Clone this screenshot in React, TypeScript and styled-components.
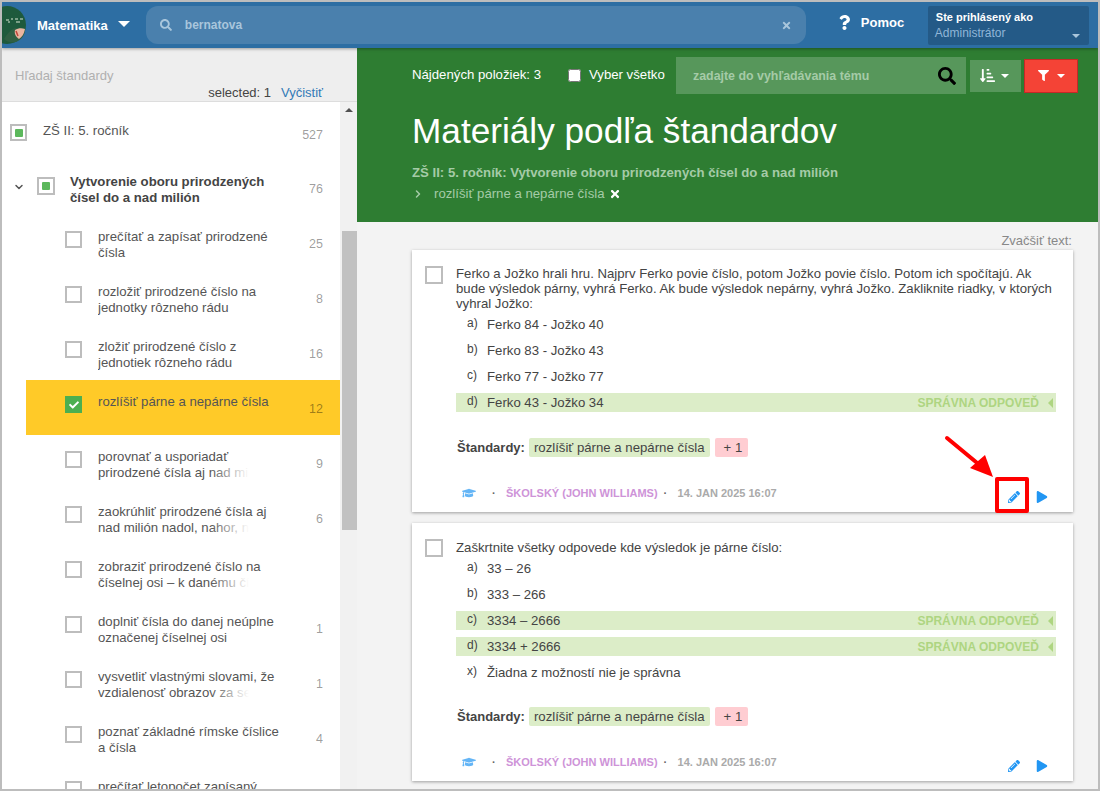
import styled, { createGlobalStyle } from "styled-components";
import {
  FaCheck,
  FaFilter,
  FaGraduationCap,
  FaPencilAlt,
  FaPlay,
  FaQuestion,
  FaSearch,
  FaSortAmountDownAlt,
  FaTimes,
} from "react-icons/fa";
import { FiChevronDown, FiChevronRight } from "react-icons/fi";

const GlobalStyle = createGlobalStyle`
  html, body {
    margin: 0;
    height: 100%;
    overflow: hidden;
  }
  body {
    font-family: "Liberation Sans", Arial, sans-serif;
    font-size: 13.2px;
    color: #444;
  }
`;

const Frame = styled.div`
  height: 100vh;
  box-sizing: border-box;
  border: 2px solid #bdbdbd;
  display: flex;
  flex-direction: column;
  overflow: hidden;
  position: relative;
`;

const Header = styled.header`
  height: 46px;
  flex: none;
  display: flex;
  align-items: center;
  background: #2d6ea3;
  box-shadow: 0 1px 3px rgba(0, 0, 0, 0.35);
  position: relative;
  z-index: 2;
`;

const Logo = styled.svg`
  width: 24px;
  height: 38px;
  flex: none;
`;

const SubjectName = styled.span`
  margin-left: 11px;
  font-size: 13px;
  font-weight: bold;
  color: #fff;
`;

const Caret = styled.span<{ $size?: number; $color?: string }>`
  display: inline-block;
  width: 0;
  height: 0;
  border-left: ${(p) => p.$size ?? 4}px solid transparent;
  border-right: ${(p) => p.$size ?? 4}px solid transparent;
  border-top: ${(p) => p.$size ?? 4}px solid ${(p) => p.$color ?? "#fff"};
`;

const SubjectCaret = styled(Caret)`
  margin: -3px 16px 0 10px;
`;

const HeaderSearch = styled.div`
  width: 660px;
  height: 38px;
  box-sizing: border-box;
  display: flex;
  align-items: center;
  padding: 0 14px 0 14px;
  border-radius: 12px;
  background: #4a80ad;
  color: #a9c6dc;
  font-size: 12px;
  font-weight: bold;
  flex: none;
`;

const HeaderSearchText = styled.span`
  flex: 1;
  margin-left: 13px;
`;

const HelpLink = styled.div`
  width: 122px;
  height: 38px;
  padding: 0 0 5px 31px;
  flex: none;
  box-sizing: border-box;
  display: flex;
  align-items: center;
  gap: 9px;
  color: #fff;
  font-size: 13px;
  font-weight: bold;
`;

const UserBox = styled.div`
  width: 161px;
  height: 39px;
  box-sizing: border-box;
  padding: 4px 8px 0;
  flex: none;
  background: #245a87;
  border-radius: 2px;
  position: relative;
`;

const UserTitle = styled.div`
  color: #fff;
  font-size: 11px;
  font-weight: bold;
  line-height: 15px;
`;

const UserName = styled.div`
  margin-left: -1px;
  color: #90b6d8;
  font-size: 12px;
  line-height: 16px;
`;

const UserCaret = styled(Caret)`
  position: absolute;
  right: 9px;
  bottom: 7px;
`;

const Body = styled.div`
  flex: 1;
  min-height: 0;
  display: flex;
`;

const Sidebar = styled.aside`
  width: 355px;
  flex: none;
  display: flex;
  flex-direction: column;
  background: #fff;
`;

const SidebarTop = styled.div`
  height: 54px;
  flex: none;
  box-sizing: border-box;
  padding: 20px 34px 0 13px;
  background: #eee;
  border-bottom: 1px solid #ddd;
`;

const SidebarSearch = styled.div`
  color: #b0b0b0;
  font-size: 13px;
  line-height: 15px;
`;

const SelectedLine = styled.div`
  margin-top: 2px;
  text-align: right;
  font-size: 13px;
  line-height: 15px;
  color: #444;
`;

const ClearLink = styled.span`
  margin-left: 10px;
  color: #337ab7;
`;

const ListArea = styled.div`
  flex: 1;
  min-height: 0;
  display: flex;
`;

const TreeList = styled.div`
  flex: 1;
  min-width: 0;
  overflow: hidden;
`;

const RootRow = styled.div`
  height: 55px;
  box-sizing: border-box;
  display: flex;
  padding: 19px 17px 0 8px;
`;

const GroupRow = styled.div`
  height: 58px;
  display: flex;
  box-sizing: border-box;
  padding: 19px 17px 0 0;
`;

const ItemRow = styled.div<{ $active?: boolean }>`
  height: 55px;
  margin-left: 24px;
  box-sizing: border-box;
  display: flex;
  padding: 13px 17px 0 39px;
  background: ${(p) => (p.$active ? "#ffca28" : "transparent")};
`;

const Check = styled.span<{ $checked?: boolean }>`
  width: 17px;
  height: 17px;
  box-sizing: border-box;
  flex: none;
  display: flex;
  align-items: center;
  justify-content: center;
  border: 2px solid ${(p) => (p.$checked ? "#4caf50" : "#bdbdbd")};
  background: ${(p) => (p.$checked ? "#4caf50" : "#fff")};
  color: #fff;
  font-size: 10px;
  margin-top: 3px;
`;

const GroupCheck = styled(Check)`
  width: 18px;
  height: 18px;
  margin-top: 1px;
`;

const PartialMark = styled.span`
  width: 8px;
  height: 8px;
  border-radius: 1px;
  background: #5cb85c;
`;

const RootLabel = styled.span`
  flex: 1;
  margin: 2px 0 0 16px;
  line-height: 16px;
  color: #555;
`;

const GroupToggle = styled.span`
  width: 35px;
  flex: none;
  box-sizing: border-box;
  padding: 5px 0 0 11px;
  font-size: 12px;
  color: #555;
`;

const GroupLabel = styled.span`
  flex: 1;
  margin: -2px 0 0 15px;
  max-width: 210px;
  font-weight: bold;
  line-height: 16px;
  color: #444;
`;

const ItemLabel = styled.span<{ $fade?: boolean }>`
  flex: 1;
  position: relative;
  margin: 1px 0 0 16px;
  max-width: 190px;
  height: 32px;
  overflow: hidden;
  line-height: 16px;
  color: #555;

  &::after {
    content: "";
    display: ${(p) => (p.$fade ? "block" : "none")};
    position: absolute;
    top: 16px;
    left: 112px;
    right: 0;
    height: 16px;
    background: linear-gradient(to right, rgba(255, 255, 255, 0), #fff 50%);
  }
`;

const Count = styled.span`
  margin-left: auto;
  padding-top: 9px;
  line-height: 14px;
  font-size: 12.5px;
  color: rgba(0, 0, 0, 0.4);
`;

const RootCount = styled(Count)`
  padding-top: 7px;
`;

const GroupCount = styled(Count)`
  padding-top: 6px;
`;

const ScrollTrack = styled.div`
  width: 17px;
  flex: none;
  background: #f1f1f1;
`;

const ScrollArrow = styled.div`
  display: flex;
  justify-content: center;
  padding-top: 6px;
  height: 11px;
`;

const ScrollUp = styled.span`
  width: 0;
  height: 0;
  border-left: 4px solid transparent;
  border-right: 4px solid transparent;
  border-bottom: 4px solid #505050;
`;

const ScrollThumb = styled.div`
  width: 15px;
  height: 299px;
  margin: 112px 0 0 2px;
  background: #c1c1c1;
`;

const Main = styled.main`
  flex: 1;
  min-width: 0;
  display: flex;
  flex-direction: column;
  background: #f3f3f3;
  position: relative;
`;

const Hero = styled.section`
  height: 174px;
  flex: none;
  box-sizing: border-box;
  background: #2e7d32;
  padding: 9px 19px 0 55px;
`;

const HeroBar = styled.div`
  display: flex;
  align-items: center;
  color: #fff;
`;

const FoundLabel = styled.span`
  width: 156px;
  flex: none;
  margin-bottom: 2px;
`;

const SelectAll = styled.label`
  width: 108px;
  flex: none;
  display: flex;
  align-items: center;
  gap: 8px;
`;

const SelectAllText = styled.span`
  margin-bottom: 2px;
`;

const NativeCheck = styled.input`
  width: 13px;
  height: 13px;
  margin: 0;
`;

const TopicSearch = styled.div`
  width: 290px;
  height: 37px;
  flex: none;
  box-sizing: border-box;
  padding: 0 10px 0 17px;
  display: flex;
  align-items: center;
  justify-content: space-between;
  background: rgba(255, 255, 255, 0.2);
  color: #a5cba7;
  font-weight: bold;
  font-size: 12.4px;
`;

const TopicIcon = styled.span`
  color: #000;
  font-size: 18px;
  display: flex;
`;

const SortButton = styled.div`
  width: 51px;
  height: 32px;
  margin-left: 4px;
  box-sizing: border-box;
  padding-right: 2px;
  flex: none;
  display: flex;
  align-items: center;
  justify-content: center;
  gap: 6px;
  background: rgba(255, 255, 255, 0.2);
  color: #fff;
  font-size: 15px;
`;

const FilterButton = styled(SortButton)`
  width: 54px;
  height: 34px;
  margin-left: 3px;
  padding-right: 0;
  background: #f44336;
  border: 1px solid #c62828;
  gap: 8px;
`;

const HeroTitle = styled.h1`
  margin: 16px 0 0;
  font-size: 35.2px;
  font-weight: normal;
  line-height: 42px;
  color: #fff;
`;

const HeroPath = styled.div`
  margin-top: 13px;
  font-weight: bold;
  line-height: 16px;
  color: #a5cba7;
`;

const HeroChip = styled.div`
  margin-top: 5px;
  display: flex;
  align-items: center;
  color: #a5cba7;
  line-height: 16px;
`;

const HeroChipArrow = styled.span`
  width: 22px;
  box-sizing: border-box;
  display: flex;
  font-size: 12px;
`;

const HeroChipClose = styled.span`
  margin-left: 4px;
  display: flex;
  color: #fff;
  font-size: 12px;
`;

const Content = styled.div`
  flex: 1;
  min-height: 0;
  overflow: hidden;
  padding: 0 25px 0 55px;
`;

const ZoomLabel = styled.div`
  height: 28px;
  box-sizing: border-box;
  padding: 12px 1px 0 0;
  text-align: right;
  font-size: 13px;
  line-height: 14px;
  color: #888;
`;

const Card = styled.article<{ $height: number }>`
  height: ${(p) => p.$height}px;
  box-sizing: border-box;
  margin-bottom: 11px;
  padding: 16px 17px 0 13px;
  background: #fff;
  box-shadow: 0 1px 3px rgba(0, 0, 0, 0.35);
  display: flex;
  gap: 13px;
`;

const CardCheck = styled(Check)`
  width: 18px;
  height: 18px;
  margin-top: 0;
`;

const CardBody = styled.div`
  flex: 1;
  min-width: 0;
`;

const Question = styled.p<{ $top: number; $bottom: number }>`
  margin: ${(p) => p.$top}px 0 ${(p) => p.$bottom}px;
  line-height: 15px;
  color: #444;
`;

const Answers = styled.div`
  margin-top: -3px;
`;

const Answer = styled.div<{ $correct?: boolean }>`
  height: 19px;
  margin-top: 7px;
  display: flex;
  align-items: center;
  padding: 0 3px 0 11px;
  background: ${(p) => (p.$correct ? "#dcedc8" : "transparent")};
  color: #444;
`;

const AnswerLetter = styled.span`
  width: 20px;
  flex: none;
  margin-bottom: 4px;
  font-size: 12px;
`;

const CorrectNote = styled.span`
  margin-left: auto;
  display: flex;
  align-items: center;
  gap: 9px;
  color: #aed581;
  font-weight: bold;
  font-size: 12px;
`;

const CorrectArrow = styled.span`
  width: 0;
  height: 0;
  border-top: 5px solid transparent;
  border-bottom: 5px solid transparent;
  border-right: 5px solid #aed581;
`;

const StandardsRow = styled.div<{ $gap: number }>`
  margin: ${(p) => p.$gap}px 0 0 1px;
  display: flex;
  align-items: center;
  gap: 4px;
`;

const StandardsLabel = styled.span`
  font-weight: bold;
  font-size: 13px;
  color: #444;
`;

const Chip = styled.span<{ $tone: "green" | "red" }>`
  height: 19px;
  display: flex;
  align-items: center;
  padding: 0 5px;
  border-radius: 2px;
  color: #444;
  background: ${(p) => (p.$tone === "green" ? "#dcedc8" : "#ffcdd2")};
`;

const PlusChip = styled(Chip)`
  margin-left: 1px;
  padding: 0 6px 0 9px;
`;

const CardFooter = styled.div`
  margin-top: 26px;
  display: flex;
  align-items: center;
  font-size: 11px;
  font-weight: bold;
  color: #aaa;
`;

const CapIcon = styled.span`
  margin-left: 6px;
  width: 30px;
  display: flex;
  color: #64b5f6;
  font-size: 14px;
`;

const Dot = styled.span`
  width: 14px;
  color: #666;
`;

const Author = styled.span`
  color: #ce93d8;
  margin-right: 6px;
`;

const CardActions = styled.span`
  margin: 8px 8px 0 auto;
  display: flex;
  align-items: center;
  gap: 16px;
  color: #2196f3;
  font-size: 12px;
`;

const HighlightBox = styled.div`
  position: absolute;
  left: 638px;
  top: 429px;
  width: 34px;
  height: 36px;
  box-sizing: border-box;
  border: 4px solid #f00;
  border-radius: 2px;
`;

const PointerArrow = styled.svg`
  position: absolute;
  left: 585px;
  top: 385px;
  width: 55px;
  height: 48px;
`;

type TreeItem = { label: string; count?: number; fade?: boolean; active?: boolean };

const treeItems: TreeItem[] = [
  { label: "prečítať a zapísať prirodzené čísla", count: 25 },
  { label: "rozložiť prirodzené číslo na jednotky rôzneho rádu", count: 8 },
  { label: "zložiť prirodzené číslo z jednotiek rôzneho rádu", count: 16 },
  { label: "rozlíšiť párne a nepárne čísla", count: 12, active: true },
  { label: "porovnať a usporiadať prirodzené čísla aj nad milión", count: 9, fade: true },
  { label: "zaokrúhliť prirodzené čísla aj nad milión nadol, nahor, na", count: 6, fade: true },
  { label: "zobraziť prirodzené číslo na číselnej osi – k danému číslu", fade: true },
  { label: "doplniť čísla do danej neúplne označenej číselnej osi", count: 1 },
  { label: "vysvetliť vlastnými slovami, že vzdialenosť obrazov za sebou", count: 1, fade: true },
  { label: "poznať základné rímske číslice a čísla", count: 4 },
  { label: "prečítať letopočet zapísaný rímskymi číslicami", count: 2 },
];

type QuestionData = {
  text: string;
  height: number;
  top: number;
  bottom: number;
  standardsGap: number;
  answers: { letter: string; text: string; correct?: boolean }[];
};

const questions: QuestionData[] = [
  {
    text: "Ferko a Jožko hrali hru. Najprv Ferko povie číslo, potom Jožko povie číslo. Potom ich spočítajú. Ak bude výsledok párny, vyhrá Ferko. Ak bude výsledok nepárny, vyhrá Jožko. Zakliknite riadky, v ktorých vyhral Jožko:",
    height: 262,
    top: 0,
    bottom: 0,
    standardsGap: 26,
    answers: [
      { letter: "a)", text: "Ferko 84 - Jožko 40" },
      { letter: "b)", text: "Ferko 83 - Jožko 43" },
      { letter: "c)", text: "Ferko 77 - Jožko 77" },
      { letter: "d)", text: "Ferko 43 - Jožko 34", correct: true },
    ],
  },
  {
    text: "Zaškrtnite všetky odpovede kde výsledok je párne číslo:",
    height: 258,
    top: 1,
    bottom: -2,
    standardsGap: 25,
    answers: [
      { letter: "a)", text: "33 – 26" },
      { letter: "b)", text: "333 – 266" },
      { letter: "c)", text: "3334 – 2666", correct: true },
      { letter: "d)", text: "3334 + 2666", correct: true },
      { letter: "x)", text: "Žiadna z možností nie je správna" },
    ],
  },
];

function App() {
  return (
    <Frame>
      <GlobalStyle />
      <Header>
        <Logo viewBox="0 0 24 38">
          <circle cx="5" cy="19" r="19" fill="#1e5a3c" />
          <path d="M2 33c3-5 6-9 11-11l10 2c0 5-4 10-9 12-5 1-9 0-12-3z" fill="#2f5f43" />
          <path d="M13 24c3-2 7-2 10-1-1 5-3 8-6 10-3-2-5-5-4-9z" fill="#e9b5a0" />
          <path d="M14 25l2 5" stroke="#c2453a" strokeWidth="1.5" />
          <path d="M4 14h3M9 13h2M13 13h3M18 13h3M6 16h2M14 16h4" stroke="#d7e6d2" strokeWidth="1.2" />
        </Logo>
        <SubjectName>Matematika</SubjectName>
        <SubjectCaret $size={6} />
        <HeaderSearch>
          <FaSearch size={12} color="#a9c6dc" />
          <HeaderSearchText>bernatova</HeaderSearchText>
          <FaTimes size={11} color="#a9c6dc" />
        </HeaderSearch>
        <HelpLink>
          <FaQuestion size={15} />
          Pomoc
        </HelpLink>
        <UserBox>
          <UserTitle>Ste prihlásený ako</UserTitle>
          <UserName>Administrátor</UserName>
          <UserCaret $size={4} $color="#a9c6dc" />
        </UserBox>
      </Header>
      <Body>
        <Sidebar>
          <SidebarTop>
            <SidebarSearch>Hľadaj štandardy</SidebarSearch>
            <SelectedLine>
              selected: 1<ClearLink>Vyčistiť</ClearLink>
            </SelectedLine>
          </SidebarTop>
          <ListArea>
            <TreeList>
              <RootRow>
                <Check>
                  <PartialMark />
                </Check>
                <RootLabel>ZŠ II: 5. ročník</RootLabel>
                <RootCount>527</RootCount>
              </RootRow>
              <GroupRow>
                <GroupToggle>
                  <FiChevronDown strokeWidth={3} />
                </GroupToggle>
                <GroupCheck>
                  <PartialMark />
                </GroupCheck>
                <GroupLabel>Vytvorenie oboru prirodzených čísel do a nad milión</GroupLabel>
                <GroupCount>76</GroupCount>
              </GroupRow>
              {treeItems.map((item) => (
                <ItemRow key={item.label} $active={item.active}>
                  <Check $checked={item.active}>{item.active && <FaCheck />}</Check>
                  <ItemLabel $fade={item.fade}>{item.label}</ItemLabel>
                  <Count>{item.count}</Count>
                </ItemRow>
              ))}
            </TreeList>
            <ScrollTrack>
              <ScrollArrow>
                <ScrollUp />
              </ScrollArrow>
              <ScrollThumb />
            </ScrollTrack>
          </ListArea>
        </Sidebar>
        <Main>
          <Hero>
            <HeroBar>
              <FoundLabel>Nájdených položiek: 3</FoundLabel>
              <SelectAll>
                <NativeCheck type="checkbox" />
                <SelectAllText>Vyber všetko</SelectAllText>
              </SelectAll>
              <TopicSearch>
                zadajte do vyhľadávania tému
                <TopicIcon>
                  <FaSearch />
                </TopicIcon>
              </TopicSearch>
              <SortButton>
                <FaSortAmountDownAlt />
                <Caret />
              </SortButton>
              <FilterButton>
                <FaFilter size={11} />
                <Caret />
              </FilterButton>
            </HeroBar>
            <HeroTitle>Materiály podľa štandardov</HeroTitle>
            <HeroPath>ZŠ II: 5. ročník: Vytvorenie oboru prirodzených čísel do a nad milión</HeroPath>
            <HeroChip>
              <HeroChipArrow>
                <FiChevronRight strokeWidth={3} />
              </HeroChipArrow>
              rozlíšiť párne a nepárne čísla
              <HeroChipClose>
                <FaTimes />
              </HeroChipClose>
            </HeroChip>
          </Hero>
          <Content>
            <ZoomLabel>Zvačšiť text:</ZoomLabel>
            {questions.map((q) => (
              <Card key={q.text} $height={q.height}>
                <CardCheck />
                <CardBody>
                  <Question $top={q.top} $bottom={q.bottom}>
                    {q.text}
                  </Question>
                  <Answers>
                    {q.answers.map((a) => (
                      <Answer key={a.letter} $correct={a.correct}>
                        <AnswerLetter>{a.letter}</AnswerLetter>
                        {a.text}
                        {a.correct && (
                          <CorrectNote>
                            SPRÁVNA ODPOVEĎ
                            <CorrectArrow />
                          </CorrectNote>
                        )}
                      </Answer>
                    ))}
                  </Answers>
                  <StandardsRow $gap={q.standardsGap}>
                    <StandardsLabel>Štandardy:</StandardsLabel>
                    <Chip $tone="green">rozlíšiť párne a nepárne čísla</Chip>
                    <PlusChip $tone="red">+ 1</PlusChip>
                  </StandardsRow>
                  <CardFooter>
                    <CapIcon>
                      <FaGraduationCap />
                    </CapIcon>
                    <Dot>·</Dot>
                    <Author>ŠKOLSKÝ (JOHN WILLIAMS)</Author>
                    <Dot>·</Dot>
                    14. JAN 2025 16:07
                    <CardActions>
                      <FaPencilAlt />
                      <FaPlay />
                    </CardActions>
                  </CardFooter>
                </CardBody>
              </Card>
            ))}
          </Content>
          <PointerArrow viewBox="0 0 55 48">
            <path d="M5 5 L40 34" stroke="#f00" strokeWidth="4" strokeLinecap="round" />
            <path d="M51 44 L28 35 L43 22 Z" fill="#f00" />
          </PointerArrow>
          <HighlightBox />
        </Main>
      </Body>
    </Frame>
  );
}

export default App;
